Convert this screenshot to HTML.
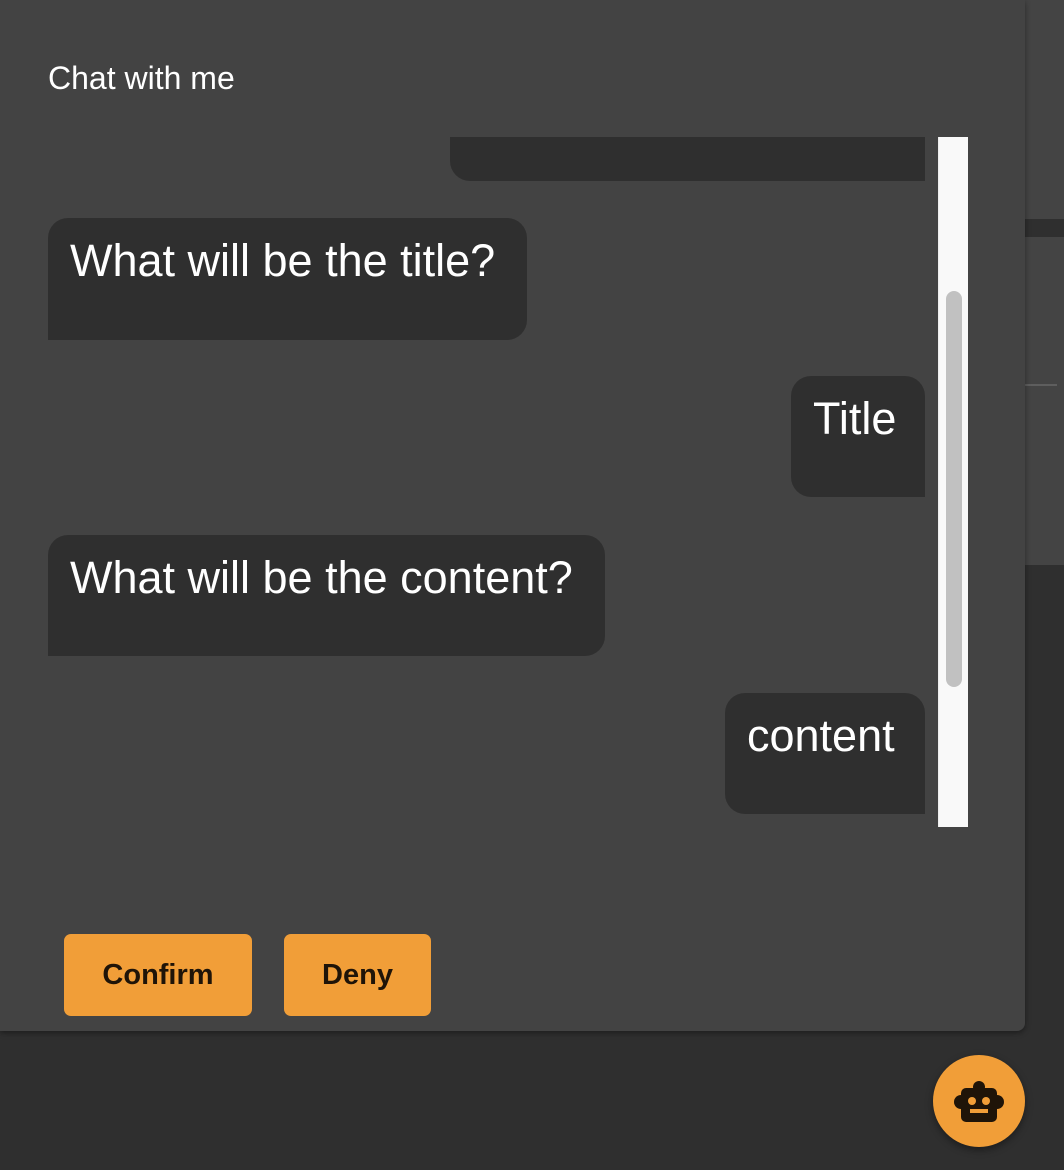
<!DOCTYPE html>
<html><head><style>
body{margin:0;width:1064px;height:1170px;background:#2f2f2f;position:relative;overflow:hidden;font-family:"Liberation Sans",Roboto,sans-serif;}
.a{position:absolute}
.b{position:absolute;background:#2f2f2f;color:#fff;font-size:45px;box-sizing:border-box;padding:17px 22px;line-height:52px;border-radius:20px;white-space:nowrap}
.btn{position:absolute;background:#f19e38;color:#1f1408;font-weight:bold;font-size:29px;border-radius:7px;top:934px;height:82px;line-height:82px;text-align:center}
</style></head><body>
<div class="a" style="left:1025px;top:0;width:39px;height:219px;background:#444"></div>
<div class="a" style="left:1025px;top:237px;width:39px;height:328px;background:#444"></div>
<div class="a" style="left:1025px;top:384px;width:32px;height:2px;background:#5e5e5e"></div>
<div class="a" style="left:0;top:0;width:1025px;height:1031px;background:#434343;border-radius:0 0 8px 0;box-shadow:0 2px 6px rgba(0,0,0,.4)"></div>
<div class="a" style="left:48px;top:58px;color:#fff;font-size:32px;line-height:40px">Chat with me</div>
<div class="a" style="left:0;top:137px;width:938px;height:690px;overflow:hidden">
 <div class="b" style="left:450px;top:-60px;width:475px;height:104px;border-radius:20px 0 0 20px"></div>
 <div class="b" style="left:48px;top:81px;width:479px;height:122px;border-radius:20px 20px 20px 0">What will be the title?</div>
 <div class="b" style="left:791px;top:239px;width:134px;height:121px;border-radius:20px 20px 0 20px">Title</div>
 <div class="b" style="left:48px;top:398px;width:557px;height:121px;border-radius:20px 20px 20px 0">What will be the content?</div>
 <div class="b" style="left:725px;top:556px;width:200px;height:121px;border-radius:20px 20px 0 20px">content</div>
</div>
<div class="a" style="left:938px;top:137px;width:30px;height:690px;background:#f9f9f9;border-left:1px solid #eee;box-sizing:border-box"></div>
<div class="a" style="left:946px;top:291px;width:16px;height:396px;background:#c1c1c1;border-radius:8px"></div>
<div class="btn" style="left:64px;width:188px">Confirm</div>
<div class="btn" style="left:284px;width:147px">Deny</div>
<div class="a" style="left:933px;top:1055px;width:92px;height:92px;border-radius:50%;background:#f19e38;box-shadow:0 3px 8px rgba(0,0,0,.4)"></div>
<svg class="a" style="left:953px;top:1078px" width="52" height="46" viewBox="0 0 52 46">
 <circle cx="26" cy="9" r="6" fill="#1f1408"/>
 <rect x="8" y="10" width="36" height="34" rx="5" fill="#1f1408"/>
 <rect x="1" y="17" width="50" height="14" rx="7" fill="#1f1408"/>
 <circle cx="19" cy="23" r="4" fill="#f19e38"/>
 <circle cx="33" cy="23" r="4" fill="#f19e38"/>
 <rect x="17" y="31" width="18" height="4" fill="#f19e38"/>
</svg>
</body></html>
